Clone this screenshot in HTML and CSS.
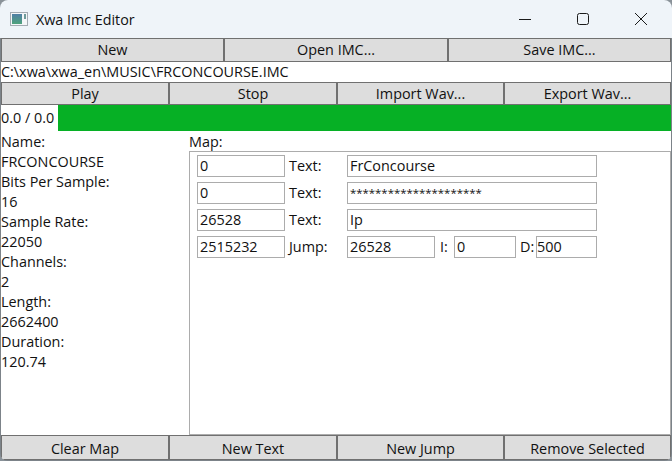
FILE: index.html
```html
<!DOCTYPE html>
<html lang="en">
<head>
    <meta charset="UTF-8">
    <title>Xwa Imc Editor</title>
    <link rel="stylesheet" href="styles.css">
</head>
<body>
    <div class="window">
        <div class="titlebar">
            <svg class="app-icon" width="18" height="14" viewBox="0 0 18 14">
                <defs>
                    <linearGradient id="iconFill" x1="0" y1="0" x2="0" y2="1">
                        <stop offset="0" stop-color="#4f7fa6"/>
                        <stop offset="1" stop-color="#4fa37c"/>
                    </linearGradient>
                </defs>
                <rect x="0.5" y="0.5" width="17" height="13" fill="#f4f6f8" stroke="#a3abb2"/>
                <rect x="2" y="2" width="10" height="10" fill="url(#iconFill)"/>
                <rect x="14" y="2" width="2" height="5" fill="#6f9a9a"/>
            </svg>
            <span class="title">Xwa Imc Editor</span>
            <div class="caption-buttons">
                <svg width="58" height="38" viewBox="0 0 58 38"><path d="M23 19.5H35" stroke="#1a1a1a" fill="none"/></svg>
                <svg width="58" height="38" viewBox="0 0 58 38"><rect x="23.5" y="13.5" width="11" height="11" rx="2" stroke="#1a1a1a" fill="none"/></svg>
                <svg width="58" height="38" viewBox="0 0 58 38"><path d="M23 13L35 25M35 13L23 25" stroke="#1a1a1a" fill="none"/></svg>
            </div>
        </div>

        <div class="btn-row three">
            <button>New</button>
            <button>Open IMC...</button>
            <button>Save IMC...</button>
        </div>
        <div class="path">C:\xwa\xwa_en\MUSIC\FRCONCOURSE.IMC</div>
        <div class="btn-row four">
            <button>Play</button>
            <button>Stop</button>
            <button>Import Wav...</button>
            <button>Export Wav...</button>
        </div>
        <div class="progress">
            <span class="time">0.0 / 0.0</span>
            <div class="bar"></div>
        </div>

        <div class="main">
            <div class="info">
                <div>Name:</div>
                <div>FRCONCOURSE</div>
                <div>Bits Per Sample:</div>
                <div>16</div>
                <div>Sample Rate:</div>
                <div>22050</div>
                <div>Channels:</div>
                <div>2</div>
                <div>Length:</div>
                <div>2662400</div>
                <div>Duration:</div>
                <div>120.74</div>
            </div>
            <div class="map">
                <div class="map-label">Map:</div>
                <div class="map-list">
                    <div class="map-row">
                        <div class="field pos">0</div>
                        <span class="kind">Text:</span>
                        <div class="field value">FrConcourse</div>
                    </div>
                    <div class="map-row">
                        <div class="field pos">0</div>
                        <span class="kind">Text:</span>
                        <div class="field value stars">*********************</div>
                    </div>
                    <div class="map-row">
                        <div class="field pos">26528</div>
                        <span class="kind">Text:</span>
                        <div class="field value">Ip</div>
                    </div>
                    <div class="map-row">
                        <div class="field pos">2515232</div>
                        <span class="kind">Jump:</span>
                        <div class="field target">26528</div>
                        <span class="small-label i-label">I:</span>
                        <div class="field small">0</div>
                        <span class="small-label d-label">D:</span>
                        <div class="field small d-value">500</div>
                    </div>
                </div>
            </div>
        </div>

        <div class="btn-row four bottom">
            <button>Clear Map</button>
            <button>New Text</button>
            <button>New Jump</button>
            <button>Remove Selected</button>
        </div>
    </div>
</body>
</html>
```

FILE: styles.css
```css
html, body {
    margin: 0;
    height: 100%;
    overflow: hidden;
    background-color: #8a9299;
}
body {
    font-family: "Open Sans", "Noto Sans", sans-serif;
    font-size: 14.4px;
    color: #111;
}
.window {
    box-sizing: border-box;
    display: flex;
    flex-direction: column;
    height: 461px;
    padding: 0 1px 1px;
    background-color: #7c8389;
    border-radius: 8px;
    overflow: hidden;
}
.titlebar {
    display: flex;
    align-items: center;
    flex: 0 0 38px;
    margin: 0 -1px;
    padding-left: 10px;
    background-color: #eff4f9;
}
.app-icon {
    margin-right: 8px;
}
.title {
    font-size: 14.3px;
}
.caption-buttons {
    display: flex;
    margin-left: auto;
    margin-right: 2px;
}
.caption-buttons svg {
    display: block;
}
.btn-row {
    display: grid;
    flex: 0 0 24px;
}
.btn-row.three {
    grid-template-columns: 223px 224px 223px;
}
.btn-row.four {
    grid-template-columns: 168px 168px 167px 167px;
    flex-basis: 23px;
}
.btn-row.bottom {
    flex-basis: 25px;
}
button {
    box-sizing: border-box;
    margin: 0;
    padding: 0 0 1px;
    font: inherit;
    color: #111;
    background-color: #dddddd;
    border: 1px solid #707070;
}
.bottom button {
    padding: 1px 0 0;
}
.path {
    flex: 0 0 20px;
    line-height: 20px;
    white-space: nowrap;
    background-color: #fff;
}
.progress {
    display: flex;
    flex: 0 0 26px;
    background-color: #fff;
}
.time {
    width: 57px;
    line-height: 25px;
}
.bar {
    flex: 1;
    background-color: #06b025;
}
.main {
    display: flex;
    flex: 1;
    min-height: 0;
    background-color: #fff;
}
.info {
    width: 188px;
    padding-top: 1px;
    line-height: 20px;
}
.map {
    display: flex;
    flex-direction: column;
    flex: 1;
}
.map-label {
    flex: 0 0 20px;
    margin-bottom: -1px;
    line-height: 21px;
}
.map-list {
    flex: 1;
    display: flex;
    flex-direction: column;
    gap: 5px;
    padding: 3px 7px;
    border: 1px solid #acacac;
}
.map-row {
    display: flex;
    align-items: center;
    height: 22px;
}
.field {
    box-sizing: border-box;
    height: 22px;
    padding-left: 2px;
    line-height: 19px;
    background-color: #fff;
    border: 1px solid #acacac;
    white-space: nowrap;
    overflow: hidden;
}
.pos {
    width: 88px;
}
.kind {
    box-sizing: border-box;
    width: 62px;
    margin-top: -2px;
    padding-left: 4px;
}
.value {
    width: 250px;
}
.stars {
    font-size: 11.4px;
}
.target {
    width: 88px;
}
.small-label {
    margin-top: -2px;
}
.i-label {
    width: 14px;
    margin-left: 5px;
}
.d-label {
    width: 16px;
    margin-left: 4px;
}
.small {
    width: 62px;
}
.d-value {
    width: 61px;
    padding-left: 0;
}
```
